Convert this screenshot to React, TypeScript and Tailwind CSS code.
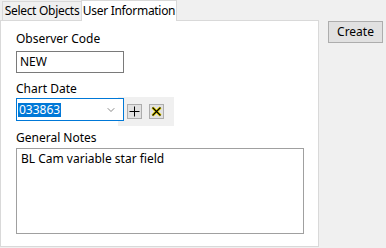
import { ChevronDown } from "lucide-react";

export default function App() {
  return (
    <div className="w-[386px] h-[248px] bg-[#f0f0f0] flex text-[12px] text-black font-['Segoe_UI','Noto_Sans',sans-serif] leading-none whitespace-nowrap">
      {/* Tab control */}
      <div className="w-[319px] h-[247px] flex flex-col">
        <div className="h-[21px] flex items-end pl-[2px] relative z-10">
          <div className="h-[19px] w-[80px] border border-b-0 border-[#d9d9d9] bg-[#f0f0f0] flex items-center justify-center mb-[1px] tracking-[-0.3px]">
            Select Objects
          </div>
          <div className="h-[21px] w-[96px] border border-b-0 border-[#d9d9d9] bg-white flex items-center justify-center -ml-[1px] pb-[1px] tracking-[-0.3px]">
            User Information
          </div>
        </div>
        <div className="flex-1 -mt-[1px] border border-[#d9d9d9] bg-white px-[15px] pt-[12px]">
          <div className="h-[18px]">Observer Code</div>
          <div className="w-[108px] h-[22px] border border-[#7a7a7a] flex items-center px-[3px]">NEW</div>

          <div className="h-[15px] mt-[10px]">Chart Date</div>
          <div className="flex items-start -mt-[1px]">
            <div className="w-[108px] h-[23px] mt-[1px] border border-[#0078d7] flex items-center pl-[1px] pr-[6px] bg-white relative z-10">
              <span className="bg-[#0078d7] text-white px-[1px] h-[14px] flex items-center">033863</span>
              <ChevronDown className="ml-auto w-[12px] h-[12px] text-[#606060]" strokeWidth={1.5} />
            </div>
            <div className="-ml-[6px] w-[56px] h-[29px] bg-[#f0f0f0] flex items-start pt-[7px] pl-[9px] gap-[7px]">
              <div className="w-[15px] h-[15px] border border-[#adadad] bg-[#e1e1e1] flex items-center justify-center">
                <svg width="11" height="11" viewBox="0 0 11 11">
                  <path d="M5.5 0.5V10.5M0.5 5.5H10.5" stroke="#000" strokeWidth="1" />
                </svg>
              </div>
              <div className="w-[15px] h-[15px] border border-[#adadad] bg-[#e1e1e1] flex items-center justify-center">
                <svg width="11" height="11" viewBox="0 0 11 11">
                  <path d="M1.5 1.5L9.5 9.5M9.5 1.5L1.5 9.5" stroke="#f5e000" strokeWidth="3" />
                  <path d="M1.5 1.5L9.5 9.5M9.5 1.5L1.5 9.5" stroke="#000" strokeWidth="1.3" />
                </svg>
              </div>
            </div>
          </div>

          <div className="h-[16px] mt-[6px]">General Notes</div>
          <div className="w-[288px] h-[86px] border border-[#a0a0a0] px-[4px] pt-[4px]">BL Cam variable star field</div>
        </div>
      </div>

      {/* Right buttons */}
      <div className="pl-[9px] pt-[21px]">
        <button className="w-[55px] h-[22px] border border-[#adadad] bg-[#e1e1e1] flex items-center justify-center">
          Create
        </button>
      </div>
    </div>
  );
}
